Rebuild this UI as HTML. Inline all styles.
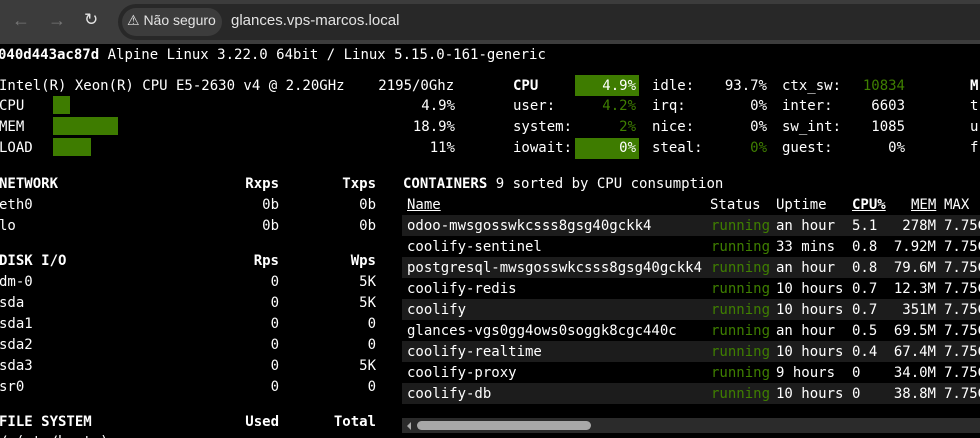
<!DOCTYPE html>
<html><head><meta charset="utf-8"><style>
*{margin:0;padding:0;box-sizing:border-box}
html,body{width:980px;height:438px;overflow:hidden}
body{background:#000;color:#fff;font-family:"DejaVu Sans Mono","Liberation Mono",monospace;font-size:14px;position:relative}
.chrome{position:absolute;left:0;top:0;width:980px;height:44px;background:#3c3c3c}
.omni{position:absolute;left:118px;top:4px;width:900px;height:36px;border-radius:18px;background:#282828}
.chip{position:absolute;left:122px;top:8px;width:100px;height:28px;border-radius:14px;background:#3c3c3c}
.ct{position:absolute;font-family:"Liberation Sans","DejaVu Sans",sans-serif;font-size:14px;color:#e3e3e3;top:13px}
.t{position:absolute;white-space:pre;line-height:16px}
.c{position:absolute;white-space:pre;line-height:21px;top:216px}
.b{font-weight:bold}
.g{color:#3f7f00}
.r{text-align:right}
.bar{position:absolute;background:#3e7c00}
.row{position:absolute;left:402px;width:578px;height:21px;background:#1c1c1c}
.u{text-decoration:underline}
</style></head><body>
<div class="chrome"></div>
<div class="omni"></div><div class="chip"></div>
<div class="ct" style="left:12px;color:#777;font-size:18px;top:10px">←</div>
<div class="ct" style="left:48px;color:#777;font-size:18px;top:10px">→</div>
<div class="ct" style="left:84px;font-size:17px;top:10px">↻</div>
<div class="ct" style="left:127px;font-size:14px;top:12px">⚠ Não seguro</div>
<div class="ct" style="left:231px;font-size:15px;top:12px">glances.vps-marcos.local</div>

<div class="t" style="left:-2px;top:47px"><span class="b">040d443ac87d</span> Alpine Linux 3.22.0 64bit / Linux 5.15.0-161-generic</div>
<div class="t" style="left:-1px;top:78px">Intel(R) Xeon(R) CPU E5-2630 v4 @ 2.20GHz    2195/0Ghz</div>
<div class="t" style="left:-1px;top:98px">CPU</div>
<div class="t" style="left:-1px;top:119px">MEM</div>
<div class="t" style="left:-1px;top:140px">LOAD</div>
<div class="bar" style="left:53px;top:96px;width:17px;height:18px"></div>
<div class="bar" style="left:53px;top:117px;width:65px;height:18px"></div>
<div class="bar" style="left:53px;top:138px;width:38px;height:18px"></div>
<div class="t r" style="left:355px;width:100px;top:98px">4.9%</div>
<div class="t r" style="left:355px;width:100px;top:119px">18.9%</div>
<div class="t r" style="left:355px;width:100px;top:140px">11%</div>

<div class="bar" style="left:575px;top:75px;width:64px;height:21px"></div>
<div class="bar" style="left:575px;top:138px;width:64px;height:21px"></div>
<div class="t b" style="left:513px;top:78px">CPU</div>
<div class="t" style="left:513px;top:98px">user:</div>
<div class="t" style="left:513px;top:119px">system:</div>
<div class="t" style="left:513px;top:140px">iowait:</div>
<div class="t r" style="left:560px;width:76px;top:78px">4.9%</div>
<div class="t r g" style="left:560px;width:76px;top:98px">4.2%</div>
<div class="t r g" style="left:560px;width:76px;top:119px">2%</div>
<div class="t r" style="left:560px;width:76px;top:140px">0%</div>
<div class="t" style="left:652px;top:78px">idle:</div>
<div class="t" style="left:652px;top:98px">irq:</div>
<div class="t" style="left:652px;top:119px">nice:</div>
<div class="t" style="left:652px;top:140px">steal:</div>
<div class="t r" style="left:690px;width:77px;top:78px">93.7%</div>
<div class="t r" style="left:690px;width:77px;top:98px">0%</div>
<div class="t r" style="left:690px;width:77px;top:119px">0%</div>
<div class="t r g" style="left:690px;width:77px;top:140px">0%</div>
<div class="t" style="left:782px;top:78px">ctx_sw:</div>
<div class="t" style="left:782px;top:98px">inter:</div>
<div class="t" style="left:782px;top:119px">sw_int:</div>
<div class="t" style="left:782px;top:140px">guest:</div>
<div class="t r g" style="left:820px;width:85px;top:78px">10834</div>
<div class="t r" style="left:820px;width:85px;top:98px">6603</div>
<div class="t r" style="left:820px;width:85px;top:119px">1085</div>
<div class="t r" style="left:820px;width:85px;top:140px">0%</div>
<div class="t b" style="left:970px;top:78px">M</div>
<div class="t" style="left:970px;top:98px">t</div>
<div class="t" style="left:970px;top:119px">u</div>
<div class="t" style="left:970px;top:140px">f</div>

<div class="t" style="left:-1px;top:176px"><b>NETWORK</b></div>
<div class="t r b" style="left:200px;width:79px;top:176px">Rxps</div>
<div class="t r b" style="left:300px;width:76px;top:176px">Txps</div>
<div class="t" style="left:-1px;top:197px">eth0</div>
<div class="t r" style="left:200px;width:79px;top:197px">0b</div>
<div class="t r" style="left:300px;width:76px;top:197px">0b</div>
<div class="t" style="left:-1px;top:218px">lo</div>
<div class="t r" style="left:200px;width:79px;top:218px">0b</div>
<div class="t r" style="left:300px;width:76px;top:218px">0b</div>

<div class="t b" style="left:-1px;top:253px">DISK I/O</div>
<div class="t r b" style="left:200px;width:79px;top:253px">Rps</div>
<div class="t r b" style="left:300px;width:76px;top:253px">Wps</div>
<div class="t" style="left:-1px;top:274px">dm-0</div><div class="t r" style="left:200px;width:79px;top:274px">0</div><div class="t r" style="left:300px;width:76px;top:274px">5K</div>
<div class="t" style="left:-1px;top:295px">sda</div><div class="t r" style="left:200px;width:79px;top:295px">0</div><div class="t r" style="left:300px;width:76px;top:295px">5K</div>
<div class="t" style="left:-1px;top:316px">sda1</div><div class="t r" style="left:200px;width:79px;top:316px">0</div><div class="t r" style="left:300px;width:76px;top:316px">0</div>
<div class="t" style="left:-1px;top:337px">sda2</div><div class="t r" style="left:200px;width:79px;top:337px">0</div><div class="t r" style="left:300px;width:76px;top:337px">0</div>
<div class="t" style="left:-1px;top:358px">sda3</div><div class="t r" style="left:200px;width:79px;top:358px">0</div><div class="t r" style="left:300px;width:76px;top:358px">5K</div>
<div class="t" style="left:-1px;top:379px">sr0</div><div class="t r" style="left:200px;width:79px;top:379px">0</div><div class="t r" style="left:300px;width:76px;top:379px">0</div>
<div class="t b" style="left:-1px;top:414px">FILE SYSTEM</div>
<div class="t r b" style="left:200px;width:79px;top:414px">Used</div>
<div class="t r b" style="left:300px;width:76px;top:414px">Total</div>
<div class="t" style="left:-1px;top:434px">/ (etc/hosts)</div>

<div class="t" style="left:403px;top:176px"><b>CONTAINERS</b> 9 sorted by CPU consumption</div>
<div class="row" style="top:215px"></div>
<div class="row" style="top:257px"></div>
<div class="row" style="top:299px"></div>
<div class="row" style="top:341px"></div>
<div class="row" style="top:383px"></div>
<div class="t" style="left:407px;top:197px"><span class="u">Name</span></div>
<div class="t" style="left:710px;top:197px">Status</div>
<div class="t" style="left:776px;top:197px">Uptime</div>
<div class="t b u" style="left:852px;top:197px">CPU%</div>
<div class="t u" style="left:911px;top:197px">MEM</div>
<div class="t" style="left:944px;top:197px">MAX</div>

<div class="c" style="left:407px">odoo-mwsgosswkcsss8gsg40gckk4
coolify-sentinel
postgresql-mwsgosswkcsss8gsg40gckk4
coolify-redis
coolify
glances-vgs0gg4ows0soggk8cgc440c
coolify-realtime
coolify-proxy
coolify-db</div>
<div class="c g" style="left:711px">running
running
running
running
running
running
running
running
running</div>
<div class="c" style="left:776px">an hour
33 mins
an hour
10 hours
10 hours
an hour
10 hours
9 hours
10 hours</div>
<div class="c" style="left:852px">5.1
0.8
0.8
0.7
0.7
0.5
0.4
0
0</div>
<div class="c r" style="left:856px;width:80px">278M
7.92M
79.6M
12.3M
351M
69.5M
67.4M
34.0M
38.8M</div>
<div class="c" style="left:944px">7.75G
7.75G
7.75G
7.75G
7.75G
7.75G
7.75G
7.75G
7.75G</div>

<div style="position:absolute;left:402px;top:418px;width:578px;height:15px;background:#2b2b2b"></div>
<div style="position:absolute;left:407px;top:422px;width:0;height:0;border-top:4px solid transparent;border-bottom:4px solid transparent;border-right:4px solid #aaa"></div>
<div style="position:absolute;left:417px;top:421px;width:174px;height:9px;border-radius:5px;background:#a8a8a8"></div>
</body></html>
